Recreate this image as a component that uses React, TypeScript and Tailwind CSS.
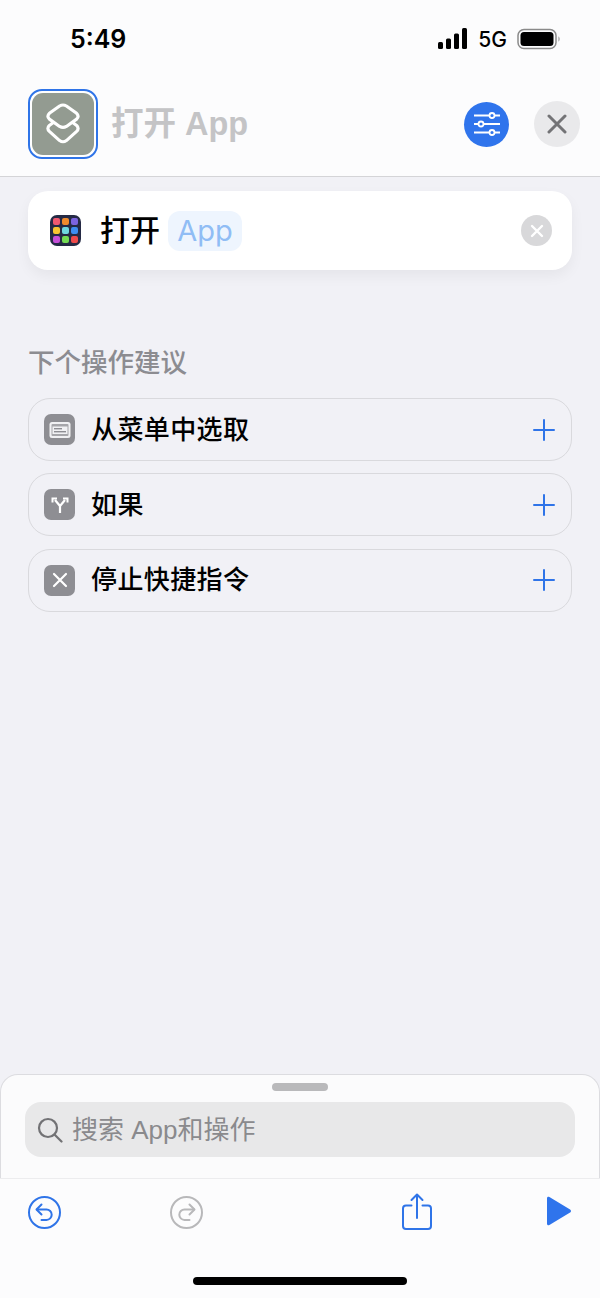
import React from "react";

const font = "font-['Inter','Noto_Sans_CJK_SC',sans-serif]";
const cjk = "font-['Liberation_Sans','Noto_Sans_CJK_SC',sans-serif]";

function PlusIcon() {
	return (
		<svg width="22" height="22" viewBox="0 0 22 22" fill="none" stroke="#2f74e8" strokeWidth="2" strokeLinecap="round">
			<path d="M11 1v20M1 11h20" />
		</svg>
	);
}

function MenuGlyph() {
	return (
		<svg width="24" height="20" viewBox="0 0 24 20" fill="none">
			<rect x="1.500" y="2" width="21" height="16" rx="2.500" fill="#f1f1f3" />
			<rect x="3.500" y="4" width="17" height="12" rx="1" fill="#a6a6aa" />
			<rect x="4.500" y="6.500" width="15" height="7.500" fill="#f1f1f3" />
			<rect x="6" y="8" width="8" height="1.400" fill="#8e8e93" />
			<rect x="6" y="11" width="12" height="1.400" fill="#8e8e93" />
		</svg>
	);
}

function BranchGlyph() {
	return (
		<svg width="20" height="20" viewBox="0 0 20 20" fill="none" stroke="white" strokeWidth="2.200">
			<path d="M10 18v-7L5 5M10 11l5-6" />
			<path d="M2.500 7.500V3.500h4.500M17.500 7.500V3.500H13" strokeWidth="2" />
		</svg>
	);
}

function StopGlyph() {
	return (
		<svg width="18" height="18" viewBox="0 0 18 18" fill="none" stroke="white" strokeWidth="2.200" strokeLinecap="round">
			<path d="M3 3l12 12M15 3L3 15" />
		</svg>
	);
}

function Suggestion({ icon, label }: { icon: React.ReactNode; label: string }) {
	return (
		<div className="flex h-[63px] items-center rounded-[22px] border-[1.5px] border-[#d9d9dd] pl-[15px] pr-[16px]">
			<div className="flex h-[31px] w-[31px] items-center justify-center rounded-[7px] bg-[#8e8e93]">{icon}</div>
			<span className={`ml-[16px] flex-1 text-[26px] font-medium leading-none tracking-[0.4px] text-black ${cjk}`}>{label}</span>
			<PlusIcon />
		</div>
	);
}

const appColors = [
	"bg-[#f0596f]", "bg-[#f08a2c]", "bg-[#7c64e0]",
	"bg-[#f7c531]", "bg-[#6fd8e0]", "bg-[#3d8df0]",
	"bg-[#c64fd8]", "bg-[#74dc54]", "bg-[#ee4a4a]",
];

export default function App() {
	return (
		<div className={`flex h-[1298px] w-[600px] flex-col overflow-hidden bg-[#f1f1f6] ${font}`}>
			{/* Header */}
			<div className="h-[177px] shrink-0 border-b border-[#d4d4d7] bg-[#fcfcfd]">
				<div className="flex h-[80px] items-start justify-between pl-[70px] pr-[39px] pt-[24px]">
					<span className="text-[25px] font-semibold leading-[31px] text-black">5:49</span>
					<div className="flex items-center pt-[4px]">
						<svg width="30" height="22" viewBox="0 0 30 22" fill="#000">
							<rect x="0" y="14" width="5" height="7" rx="1.500" />
							<rect x="8" y="10.500" width="5" height="10.500" rx="1.500" />
							<rect x="16" y="5.500" width="5" height="15.500" rx="1.500" />
							<rect x="24" y="0" width="5" height="21" rx="1.500" />
						</svg>
						<span className="ml-[10px] text-[21px] font-medium leading-none text-black">5G</span>
						<svg className="ml-[10px]" width="44" height="22" viewBox="0 0 44 22" fill="none">
							<rect x="1" y="1.500" width="38" height="19" rx="6" stroke="#8a8a8a" strokeWidth="1.500" />
							<rect x="3.500" y="4" width="33" height="14" rx="3.500" fill="#000" />
							<path d="M41.500 8.500c1.400.5 1.400 4.500 0 5z" fill="#8a8a8a" />
						</svg>
					</div>
				</div>
				<div className="flex items-center pl-[28px] pr-[20px] pt-[9px]">
					<div className="flex h-[70px] w-[70px] items-center justify-center rounded-[14px] border-2 border-[#2f74e8] bg-white">
						<div className="flex h-[62px] w-[62px] items-center justify-center rounded-[11px] bg-[#939b91]">
							<svg width="36" height="42" viewBox="-1.500 -1.500 37 43" fill="none" stroke="white" strokeWidth="3.200" strokeLinejoin="round">
								<path d="M13.500 1.500Q17 -.5 20.500 1.500L31 9Q34 12 31 15L20.500 22.500Q17 24.500 13.500 22.500L3 15Q0 12 3 9Z" />
								<path d="M7 18.500 3 21.500Q0 24.500 3 27.500L13.500 37Q17 39.500 20.500 37L31 27.500Q34 24.500 31 21.500L27 18.500" />
							</svg>
						</div>
					</div>
					<span className={`ml-[13px] mt-[1px] flex-1 text-[32.5px] font-bold leading-none text-[#c4c4c6] ${cjk}`}>打开 App</span>
					<div className="flex h-[45px] w-[45px] items-center justify-center rounded-full bg-[#2f74ec]">
						<svg width="28" height="28" viewBox="0 0 28 28" fill="none" stroke="white" strokeWidth="1.800">
							<path d="M1 5.500h26M1 14h26M1 22.500h26" />
							<circle cx="19" cy="5.500" r="2.500" fill="#2f74ec" />
							<circle cx="8" cy="14" r="2.500" fill="#2f74ec" />
							<circle cx="19" cy="22.500" r="2.500" fill="#2f74ec" />
						</svg>
					</div>
					<div className="ml-[25px] flex h-[46px] w-[46px] items-center justify-center rounded-full bg-[#e9e9eb]">
						<svg width="20" height="20" viewBox="0 0 20 20" fill="none" stroke="#737376" strokeWidth="3" strokeLinecap="round">
							<path d="M2 2l16 16M18 2 2 18" />
						</svg>
					</div>
				</div>
			</div>

			{/* Action card */}
			<div className="px-[28px] pt-[14px]">
				<div className="flex h-[79px] items-center rounded-[20px] bg-white pl-[22px] pr-[20px] shadow-[0_6px_14px_rgba(0,0,0,0.05)]">
					<div className="grid h-[31px] w-[31px] grid-cols-3 gap-[1.5px] rounded-[7px] bg-[#252a45] p-[3px]">
						{appColors.map((color) => (
							<div key={color} className={`rounded-[2px] ${color}`} />
						))}
					</div>
					<span className={`ml-[19px] mt-[1px] text-[30px] font-medium leading-none text-black ${cjk}`}>打开</span>
					<span className="ml-[8px] flex h-[40px] w-[74px] items-center justify-center rounded-[12px] bg-[#eef5fe] text-[29px] leading-none text-[#90bdf5]">App</span>
					<div className="ml-auto flex h-[31px] w-[31px] items-center justify-center rounded-full bg-[#d8d8da]">
						<svg width="14" height="14" viewBox="0 0 14 14" fill="none" stroke="white" strokeWidth="2.400" strokeLinecap="round">
							<path d="M2 2l10 10M12 2 2 12" />
						</svg>
					</div>
				</div>
			</div>

			{/* Suggestions */}
			<div className="flex flex-col px-[28px] pt-[78px]">
				<span className={`text-[26.5px] font-medium leading-[30px] text-[#8c8c91] ${cjk}`}>下个操作建议</span>
				<div className="mt-[20px] flex flex-col gap-[12.4px]">
					<Suggestion icon={<MenuGlyph />} label="从菜单中选取" />
					<Suggestion icon={<BranchGlyph />} label="如果" />
					<Suggestion icon={<StopGlyph />} label="停止快捷指令" />
				</div>
			</div>

			<div className="flex-1" />

			{/* Search sheet */}
			<div className="flex h-[104px] shrink-0 flex-col rounded-t-[18px] border border-b-0 border-[#dcdce0] bg-[#fbfbfc] px-[24px]">
				<div className="mx-auto mt-[8px] h-[8px] w-[56px] rounded-full bg-[#b9b9bb]" />
				<div className="mt-[11px] flex h-[55px] items-center rounded-[16px] bg-[#e8e8e9] pl-[12px]">
					<svg width="26" height="26" viewBox="0 0 26 26" fill="none" stroke="#727275" strokeWidth="2.200" strokeLinecap="round">
						<circle cx="11" cy="11" r="9" />
						<path d="M17.500 17.500 24.500 24.500" />
					</svg>
					<span className={`ml-[9px] text-[26px] leading-none text-[#8a8a8d] ${cjk}`}>搜索 App和操作</span>
				</div>
			</div>

			{/* Toolbar */}
			<div className="flex h-[120px] shrink-0 flex-col border-t border-[#ececee] bg-[#fcfcfd]">
				<div className="flex h-[98px] items-start px-[28px]">
					<svg className="mt-[17px]" width="33" height="33" viewBox="0 0 33 33" fill="none" stroke="#2f74e8" strokeWidth="2" strokeLinecap="round" strokeLinejoin="round">
						<circle cx="16.500" cy="16.500" r="15.500" />
						<path d="M13.500 8.500 8.500 13.500l5 5" />
						<path d="M9 13.500h9.500a5.200 5.200 0 0 1 0 10.400H13.500" />
					</svg>
					<svg className="ml-[109px] mt-[17px]" width="33" height="33" viewBox="0 0 33 33" fill="none" stroke="#b8b8ba" strokeWidth="2" strokeLinecap="round" strokeLinejoin="round">
						<circle cx="16.500" cy="16.500" r="15.500" />
						<path d="M19.500 8.500l5 5-5 5" />
						<path d="M24 13.500h-9.500a5.200 5.200 0 0 0 0 10.400h5" />
					</svg>
					<svg className="ml-[199px] mt-[14px]" width="30" height="37" viewBox="0 0 30 37" fill="none" stroke="#2f74e8" strokeWidth="2" strokeLinecap="round" strokeLinejoin="round">
						<path d="M9.500 12.500H4a3 3 0 0 0-3 3V33a3 3 0 0 0 3 3h22a3 3 0 0 0 3-3V15.500a3 3 0 0 0-3-3h-5.500" />
						<path d="M15 25V2M9.500 7 15 1.500 20.500 7" />
					</svg>
					<svg className="ml-auto mt-[17px]" width="26" height="30" viewBox="0 0 26 30" fill="#2f74ec">
						<path d="M1 2.200C1 .8 2.300.3 3.400 1l20.700 12.400c1.200.7 1.200 2.400 0 3.100L3.400 29c-1.100.7-2.400.2-2.400-1.200z" />
					</svg>
				</div>
				<div className="mx-auto h-[8px] w-[214px] rounded-full bg-black" />
			</div>
		</div>
	);
}
